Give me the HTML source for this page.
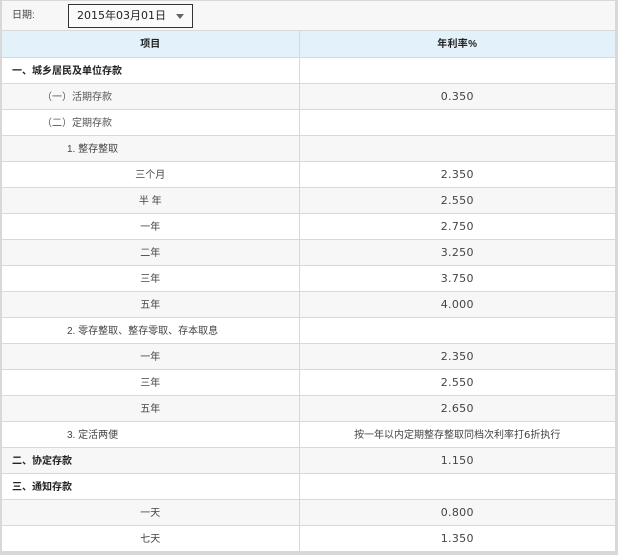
<!DOCTYPE html>
<html><head><meta charset="utf-8">
<style>
*{margin:0;padding:0;box-sizing:border-box}
body{width:618px;height:555px;overflow:hidden;background:#d8d8d8;font-family:"Liberation Sans","Noto Sans CJK SC",sans-serif;font-size:10px;color:#333;position:relative}
#wrap{position:absolute;left:2px;top:1px;width:613px;height:551px;background:#fff}
#top{position:absolute;left:0;top:0;width:613px;height:30px;background:#f7f7f7;border-bottom:1px solid #d8d8d8}
#lbl{position:absolute;left:10px;top:2px;color:#444;font-size:10px;line-height:26px}
#sel{position:absolute;left:66px;top:3px;width:125px;height:24px;border:1px solid #333;background:#fafafa;font-size:11px;line-height:22px;padding-left:8px;color:#222;font-family:"DejaVu Sans","Noto Sans CJK SC",sans-serif}
#sel:after{content:"";position:absolute;right:8px;top:9px;border-left:4px solid transparent;border-right:4px solid transparent;border-top:5px solid #666}
table{position:absolute;left:0;top:30px;width:613px;border-collapse:collapse;table-layout:fixed}
td{height:26px;border-bottom:1px solid #d8d8d8;font-size:10px;line-height:25px;color:#444;padding:0;vertical-align:top;white-space:nowrap;overflow:hidden}
td.l,td.cj{padding-top:2px;line-height:23px}
td.l{width:297px;border-right:1px solid #d8d8d8}
td.r{text-align:center;font-size:11px;color:#444;font-family:"DejaVu Sans","Noto Sans CJK SC",sans-serif;letter-spacing:0.3px}
tr.h td{background:#e3f1fa;font-weight:bold;text-align:center;color:#222}
tr.g td{background:#f7f7f7}
.b{font-weight:bold;color:#222;padding-left:10px}
.i1{padding-left:40px;color:#555}
.i2{padding-left:65px;color:#444}
.c{text-align:center;color:#444}
</style></head><body>
<div id="wrap">
<div id="top"><span id="lbl">日期:</span><div id="sel">2015年03月01日</div></div>
<table>
<tr class="h"><td class="l">项目</td><td class="r cj" style="font-size:10px;font-family:'Liberation Sans','Noto Sans CJK SC',sans-serif">年利率%</td></tr>
<tr><td class="l b">一、城乡居民及单位存款</td><td class="r"></td></tr>
<tr class="g"><td class="l i1">（一）活期存款</td><td class="r">0.350</td></tr>
<tr><td class="l i1">（二）定期存款</td><td class="r"></td></tr>
<tr class="g"><td class="l i2">1. 整存整取</td><td class="r"></td></tr>
<tr><td class="l c">三个月</td><td class="r">2.350</td></tr>
<tr class="g"><td class="l c">半 年</td><td class="r">2.550</td></tr>
<tr><td class="l c">一年</td><td class="r">2.750</td></tr>
<tr class="g"><td class="l c">二年</td><td class="r">3.250</td></tr>
<tr><td class="l c">三年</td><td class="r">3.750</td></tr>
<tr class="g"><td class="l c">五年</td><td class="r">4.000</td></tr>
<tr><td class="l i2">2. 零存整取、整存零取、存本取息</td><td class="r"></td></tr>
<tr class="g"><td class="l c">一年</td><td class="r">2.350</td></tr>
<tr><td class="l c">三年</td><td class="r">2.550</td></tr>
<tr class="g"><td class="l c">五年</td><td class="r">2.650</td></tr>
<tr><td class="l i2">3. 定活两便</td><td class="r cj" style="font-size:10px;letter-spacing:0">按一年以内定期整存整取同档次利率打6折执行</td></tr>
<tr class="g"><td class="l b">二、协定存款</td><td class="r">1.150</td></tr>
<tr><td class="l b">三、通知存款</td><td class="r"></td></tr>
<tr class="g"><td class="l c">一天</td><td class="r">0.800</td></tr>
<tr><td class="l c">七天</td><td class="r">1.350</td></tr>
</table>
</div>
</body></html>
